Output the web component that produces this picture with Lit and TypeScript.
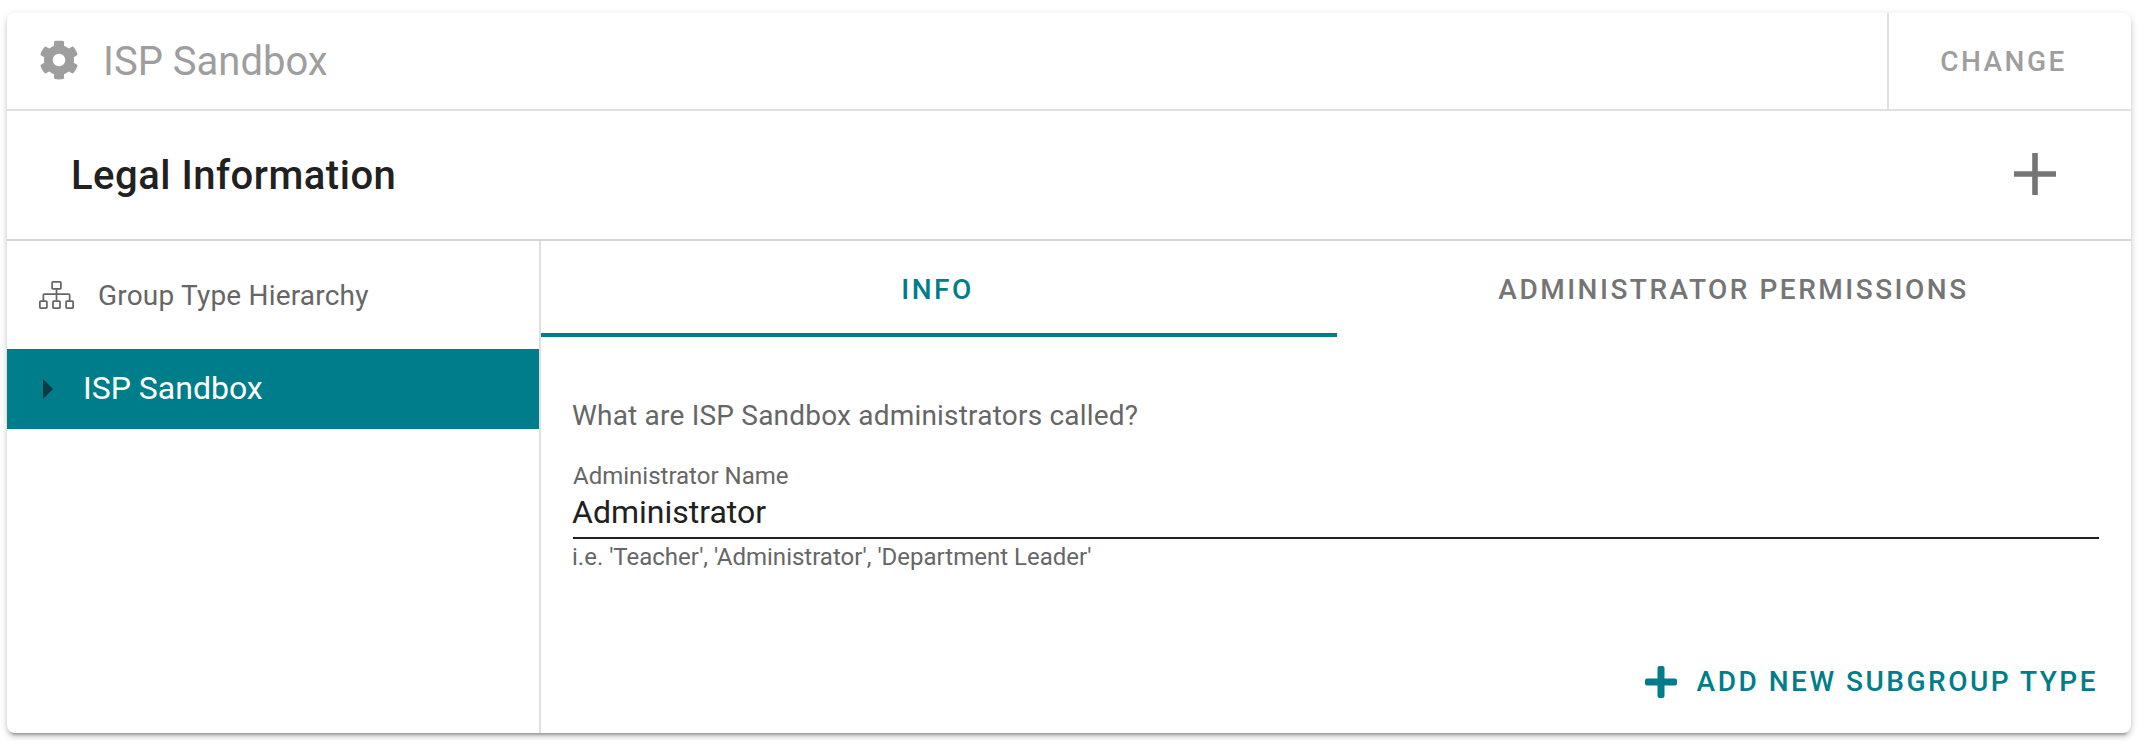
import { LitElement, html, css, svg } from "lit";
import { customElement, state } from "lit/decorators.js";

const cog = svg`<path d="M487.4 315.7l-42.6-24.6c4.3-23.2 4.3-47 0-70.2l42.6-24.6c4.9-2.8 7.1-8.6 5.5-14-11.1-35.6-30-67.8-54.7-94.6-3.8-4.1-10-5.1-14.8-2.3L380.8 110c-17.9-15.4-38.5-27.3-60.8-35.1V25.8c0-5.6-3.9-10.5-9.4-11.7-36.7-8.2-74.3-7.8-109.2 0-5.5 1.2-9.4 6.1-9.4 11.7V75c-22.2 7.9-42.8 19.8-60.8 35.1L88.7 85.5c-4.9-2.8-11-1.9-14.8 2.3-24.7 26.7-43.6 58.9-54.7 94.6-1.7 5.4.6 11.2 5.5 14L67.3 221c-4.3 23.2-4.3 47 0 70.2l-42.6 24.6c-4.9 2.8-7.1 8.6-5.5 14 11.1 35.6 30 67.8 54.7 94.6 3.8 4.1 10 5.1 14.8 2.3l42.6-24.6c17.9 15.4 38.5 27.3 60.8 35.1v49.2c0 5.6 3.9 10.5 9.4 11.7 36.7 8.2 74.3 7.8 109.2 0 5.5-1.2 9.4-6.1 9.4-11.7v-49.2c22.2-7.9 42.8-19.8 60.8-35.1l42.6 24.6c4.9 2.8 11 1.9 14.8-2.3 24.7-26.7 43.6-58.9 54.7-94.6 1.5-5.5-.7-11.3-5.6-14.1zM256 336c-44.1 0-80-35.9-80-80s35.9-80 80-80 80 35.9 80 80-35.9 80-80 80z"/>`;

@customElement("app-root")
export class AppRoot extends LitElement {
  @state() private tab = 0;

  static styles = css`
    :host {
      display: block;
      box-sizing: border-box;
      height: 743px;
      padding: 13px 10px 10px 7px;
      background: #fff;
      font-family: Roboto, sans-serif;
      color: #212121;
    }
    * { box-sizing: border-box; }
    .card {
      display: grid;
      grid-template-rows: 98px 130px 1fr;
      height: 720px;
      border-radius: 8px;
      background: #fff;
      box-shadow: 0 6px 2px -4px rgba(0, 0, 0, 0.2), 0 4px 4px 0 rgba(0, 0, 0, 0.14), 0 2px 10px 0 rgba(0, 0, 0, 0.12);
      overflow: hidden;
    }
    svg { display: block; fill: currentColor; flex: none; }
    button {
      border: 0;
      background: none;
      padding: 0;
      margin: 0;
      color: inherit;
      font: 500 28px/32px Roboto, sans-serif;
      letter-spacing: 2.5px;
      text-transform: uppercase;
      white-space: nowrap;
    }
    .top { display: flex; border-bottom: 2px solid #e0e0e0; color: #9e9e9e; }
    .title { display: flex; flex: 1; align-items: center; padding: 0 0 2px 32px; font-size: 40px; line-height: 48px; }
    .title span { padding: 3px 0 0 24px; }
    .change { width: 244px; padding: 2px 13px 0 0; border-left: 2px solid #e0e0e0; }
    .legal {
      display: flex;
      align-items: center;
      justify-content: space-between;
      padding: 0 75px 2px 64px;
      border-bottom: 2px solid #d6d6d6;
    }
    .legal h2 { margin: 0; padding-top: 4px; font: 500 40px/48px Roboto, sans-serif; letter-spacing: 0.5px; }
    .legal svg { color: #757575; }
    .body { display: grid; grid-template-columns: 534px 1fr; }
    .side { border-right: 2px solid #e0e0e0; }
    .hierarchy { display: flex; align-items: center; height: 108px; padding-left: 32px; font-size: 28px; line-height: 32px; color: #666; }
    .hierarchy span { padding: 2px 0 0 24px; letter-spacing: 0.2px; }
    .node { display: flex; align-items: center; height: 80px; padding-left: 36px; background: #007d8a; color: #fff; font-size: 32px; line-height: 40px; }
    .node svg { color: #0b3b40; }
    .node span { padding: 0 0 2px 30px; }
    .main { display: flex; flex-direction: column; min-width: 0; }
    .tabs { display: grid; grid-template-columns: 796px 794px; height: 96px; }
    .tab { padding: 5px 1px 0 0; color: #757575; border-bottom: 4px solid transparent; }
    .tab.on { padding-right: 3px; color: #007d8a; border-bottom-color: #007d8a; }
    .form { display: flex; flex-direction: column; padding: 62px 32px 0; color: #666; }
    .question { margin-left: -1px; font-size: 28px; line-height: 34px; letter-spacing: 0.2px; }
    .label { margin-top: 29px; font-size: 24px; line-height: 28px; }
    .value { height: 49px; border-bottom: 2px solid #212121; font-size: 32px; line-height: 45px; color: #212121; text-indent: -1px; }
    .hint { margin: 4px 0 0 -1px; font-size: 24px; line-height: 28px; }
    .add { display: flex; align-items: center; align-self: flex-end; margin: 95px 33px 0 0; color: #007d8a; }
    .add button { padding-left: 20px; }
  `;

  render() {
    return html`
      <section class="card">
        <header class="top">
          <div class="title">
            <svg width="40" height="40" viewBox="0 0 512 512">${cog}</svg>
            <span>ISP Sandbox</span>
          </div>
          <button class="change">Change</button>
        </header>
        <div class="legal">
          <h2>Legal Information</h2>
          <svg width="42" height="42" viewBox="0 0 42 42"><path d="M18.2 0h5.6v18.2H42v5.6H23.8V42h-5.6V23.8H0v-5.6h18.2z"/></svg>
        </div>
        <div class="body">
          <nav class="side">
            <div class="hierarchy">
              <svg width="35" height="28" viewBox="0 0 640 512"><path d="M608 352h-32v-97.590c0-16.770-13.620-30.410-30.410-30.410H336v-64h48c17.670 0 32-14.330 32-32V32c0-17.670-14.330-32-32-32H256c-17.670 0-32 14.330-32 32v96c0 17.670 14.330 32 32 32h48v64H94.410C77.620 224 64 237.640 64 254.410V352H32c-17.670 0-32 14.330-32 32v96c0 17.670 14.330 32 32 32h96c17.670 0 32-14.330 32-32v-96c0-17.670-14.330-32-32-32H96v-96h208v96h-32c-17.670 0-32 14.330-32 32v96c0 17.670 14.330 32 32 32h96c17.670 0 32-14.330 32-32v-96c0-17.670-14.330-32-32-32h-32v-96h208v96h-32c-17.670 0-32 14.330-32 32v96c0 17.670 14.330 32 32 32h96c17.670 0 32-14.330 32-32v-96c0-17.670-14.330-32-32-32zm-480 32v96H32v-96h96zm240 0v96h-96v-96h96zM256 128V32h128v96H256zm352 352h-96v-96h96v96z"/></svg>
              <span>Group Type Hierarchy</span>
            </div>
            <div class="node">
              <svg width="10" height="20" viewBox="0 0 10 20"><path d="M0 0l10 10L0 20z"/></svg>
              <span>ISP Sandbox</span>
            </div>
          </nav>
          <main class="main">
            <div class="tabs">
              ${["Info", "Administrator Permissions"].map(
                (t, i) => html`<button class="tab ${i === this.tab ? "on" : ""}" @click=${() => (this.tab = i)}>${t}</button>`
              )}
            </div>
            <div class="form">
              <div class="question">What are ISP Sandbox administrators called?</div>
              <div class="label">Administrator Name</div>
              <div class="value">Administrator</div>
              <div class="hint">i.e. 'Teacher', 'Administrator', 'Department Leader'</div>
            </div>
            <div class="add">
              <svg width="32" height="32" viewBox="0 0 32 32"><path d="M14.500 0h3a2 2 0 0 1 2 2v10.500H30a2 2 0 0 1 2 2v3a2 2 0 0 1-2 2H19.500V30a2 2 0 0 1-2 2h-3a2 2 0 0 1-2-2V19.500H2a2 2 0 0 1-2-2v-3a2 2 0 0 1 2-2h10.500V2a2 2 0 0 1 2-2z"/></svg>
              <button>Add new subgroup type</button>
            </div>
          </main>
        </div>
      </section>
    `;
  }
}
